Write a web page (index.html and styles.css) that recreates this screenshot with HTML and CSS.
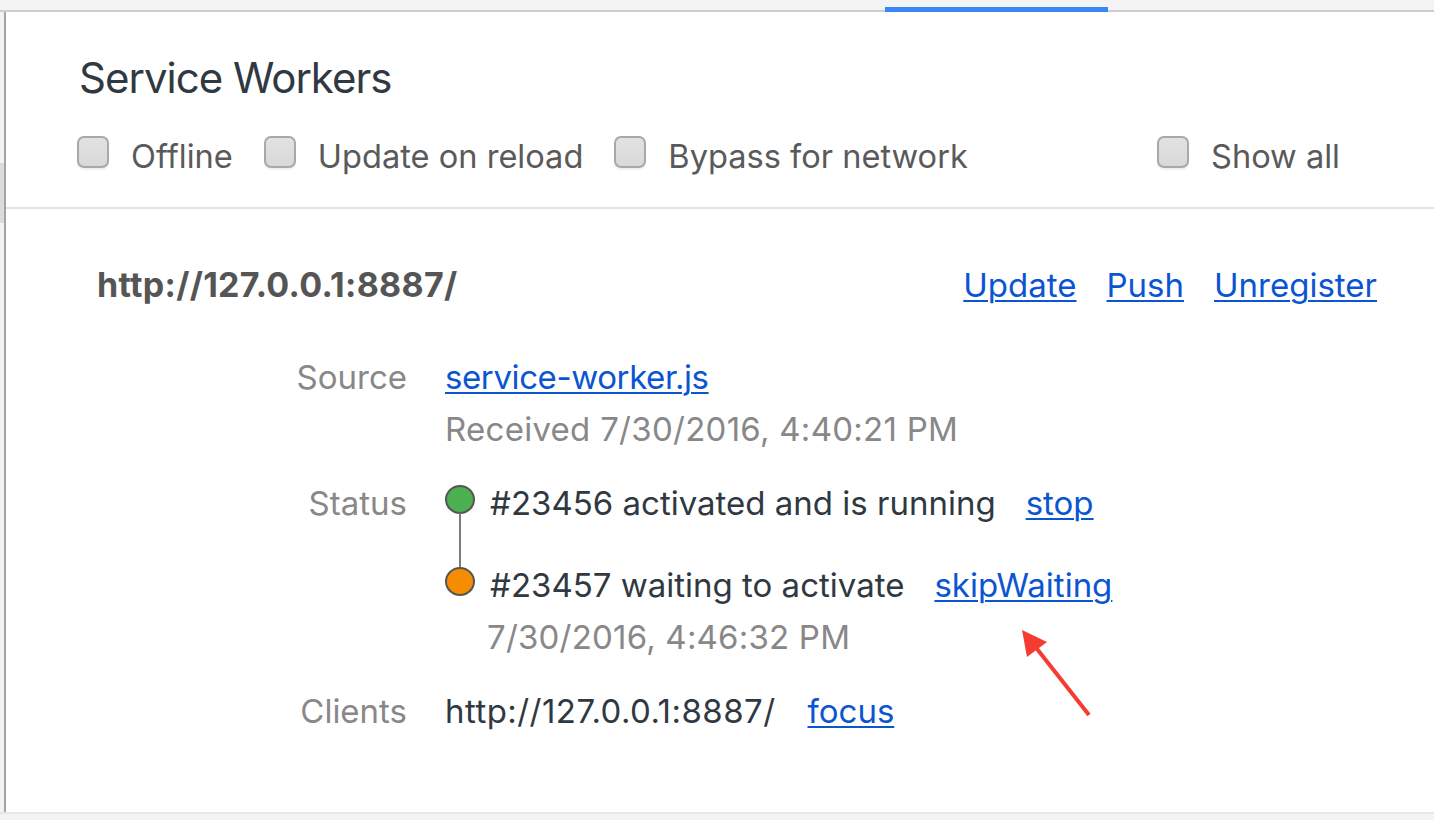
FILE: index.html
```html
<!DOCTYPE html>
<html>
<head>
<meta charset="utf-8">
<link rel="stylesheet" href="styles.css">
</head>
<body>
<div class="app">
  <div class="topbar"><div class="tab-indicator"></div></div>
  <div class="main">
    <div class="leftstrip"><div class="strip-mark"></div></div>
    <div class="content">
      <section class="sw-header">
        <h1 class="title">Service Workers</h1>
        <div class="options">
          <label class="opt"><span class="cb"></span><span>Offline</span></label>
          <label class="opt"><span class="cb"></span><span>Update on reload</span></label>
          <label class="opt"><span class="cb"></span><span>Bypass for network</span></label>
          <label class="opt opt-right"><span class="cb"></span><span>Show all</span></label>
        </div>
      </section>
      <section class="registration">
        <div class="reg-head">
          <div class="origin">http://127.0.0.1:8887/</div>
          <div class="reg-actions">
            <a class="link" href="#">Update</a>
            <a class="link" href="#">Push</a>
            <a class="link" href="#">Unregister</a>
          </div>
        </div>
        <div class="details">
          <div class="label lbl-source">Source</div>
          <div class="value">
            <div class="line-source"><a class="link script-link" href="#">service-worker.js</a></div>
            <div class="muted line-received">Received 7/30/2016, 4:40:21 PM</div>
          </div>
          <div class="label lbl-status">Status</div>
          <div class="value versions">
            <div class="version v-active">
              <span class="dot dot-green"></span>
              <span class="vtext">#23456 activated and is running</span>
              <a class="link" href="#">stop</a>
            </div>
            <div class="version v-waiting">
              <span class="dot dot-orange"></span>
              <span class="vtext">#23457 waiting to activate</span>
              <a class="link" href="#">skipWaiting</a>
            </div>
            <div class="muted vdate">7/30/2016, 4:46:32 PM</div>
          </div>
          <div class="label lbl-clients">Clients</div>
          <div class="value clients">
            <span class="client-url">http://127.0.0.1:8887/</span>
            <a class="link" href="#">focus</a>
          </div>
        </div>
      </section>
    </div>
  </div>
  <div class="bottombar"></div>
  <svg class="arrow" width="100" height="110" viewBox="0 0 100 110">
    <line x1="77" y1="95" x2="18" y2="20" stroke="#f63b33" stroke-width="4" stroke-linecap="butt"/>
    <polygon points="10,10 35,22 15,37" fill="#f63b33"/>
  </svg>
</div>
</body>
</html>
```
FILE: styles.css
```css
* { box-sizing: border-box; }
html, body { margin: 0; padding: 0; }
body {
  width: 1434px;
  height: 820px;
  overflow: hidden;
  background: #fff;
  font-family: "Inter", "Liberation Sans", sans-serif;
  color: #303942;
}
.app {
  position: relative;
  width: 1434px;
  height: 820px;
  display: flex;
  flex-direction: column;
}
.topbar {
  height: 12px;
  flex: none;
  background: #f3f3f3;
  border-bottom: 2px solid #cdcdcd;
  display: flex;
  align-items: flex-end;
}
.tab-indicator {
  margin-left: 885px;
  width: 223px;
  height: 5px;
  margin-bottom: -2px;
  background: #3c85f4;
}
.main {
  flex: 1;
  display: flex;
  min-height: 0;
}
.leftstrip {
  width: 6px;
  flex: none;
  background: #f3f3f3;
  border-right: 2px solid #a4a4a4;
  padding-top: 151px;
}
.strip-mark {
  width: 4px;
  height: 60px;
  background: #dcdcdc;
}
.content {
  flex: 1;
  display: flex;
  flex-direction: column;
}
.sw-header {
  padding: 40px 94px 0 73px;
  border-bottom: 2px solid #e4e4e4;
  height: 197px;
}
.title {
  margin: 0;
  font-weight: 400;
  font-size: 42px;
  line-height: 52px;
  color: #303942;
  letter-spacing: -1px;
}
.options {
  display: flex;
  align-items: center;
  margin-top: 32px;
  margin-left: -2px;
  font-size: 32.6px;
  color: #5a5a5a;
}
.opt {
  display: flex;
  align-items: center;
  gap: 22px;
  margin-right: 31px;
}
.opt-right { margin-left: auto; margin-right: 0; }
.cb {
  width: 32px;
  height: 32px;
  border: 2px solid #a8a8a8;
  border-radius: 7px;
  background: linear-gradient(#e2e2e2, #d8d8d8);
  box-shadow: 0 2px 1px rgba(0,0,0,0.06);
  position: relative;
  top: -4px;
}
.registration {
  padding: 56px 57px 0 91px;
  flex: 1;
}
.reg-head {
  display: flex;
  align-items: baseline;
  justify-content: space-between;
  font-size: 33px;
  line-height: 40px;
}
.origin {
  font-weight: 700;
  font-size: 34px;
  letter-spacing: 0.3px;
  color: #555;
}
.reg-actions {
  display: flex;
  gap: 30px;
}
.link {
  color: #0b55d3;
  text-decoration: underline;
  text-underline-offset: 3px;
  text-decoration-thickness: 2px;
}
.script-link { letter-spacing: -0.4px; }
.details {
  display: grid;
  grid-template-columns: 310px auto;
  column-gap: 38px;
  row-gap: 22px;
  margin-top: 46px;
  font-size: 33px;
  line-height: 52px;
}
.label {
  text-align: right;
  color: #888;
}
.muted { color: #888; }
.line-received { letter-spacing: 0.27px; }
.versions {
  position: relative;
}
.version {
  display: flex;
  align-items: center;
  height: 52px;
}
.v-waiting { margin-top: 30px; }
.dot {
  width: 30px;
  height: 29px;
  border-radius: 50%;
  border: 2px solid #555;
  flex: none;
  margin-right: 15px;
  position: relative;
  top: -4px;
}
.dot-green { background: #4caf50; }
.dot-orange { background: #f68c00; }
.v-active .dot::after {
  content: "";
  position: absolute;
  left: 12px;
  top: 26px;
  width: 2px;
  height: 56px;
  background: #7c7c7c;
}
.vtext { margin-right: 30px; }
.vdate { padding-left: 42px; letter-spacing: 0.2px; }
.clients {
  display: flex;
  gap: 32px;
}
.client-url { color: #303942; letter-spacing: 0.45px; }
.bottombar {
  height: 8px;
  flex: none;
  background: #f3f3f3;
  border-top: 2px solid #e6e6e6;
}
.arrow {
  position: absolute;
  left: 1012px;
  top: 620px;
}
```
